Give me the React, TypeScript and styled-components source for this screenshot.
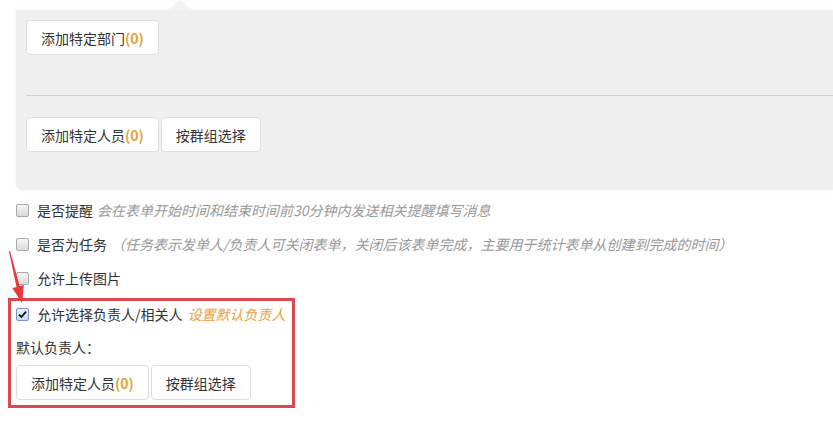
import styled, { createGlobalStyle } from 'styled-components';

const GlobalStyle = createGlobalStyle`
  body {
    margin: 0;
    background: #fefefe;
    font-family: "Noto Sans CJK SC", "Noto Sans", sans-serif;
    font-size: 14px;
    line-height: 20px;
    color: #333;
  }
`;

const Page = styled.div`
  position: relative;
  width: 833px;
  height: 423px;
  overflow: hidden;
  padding-top: 10px;
  box-sizing: border-box;
`;

const Panel = styled.div`
  position: relative;
  margin-left: 16px;
  height: 180px;
  box-sizing: border-box;
  padding: 10px 0 0 10px;
  background: #f0f0f0;
  border-radius: 0 0 0 6px;
  box-shadow: 0 0 4px rgba(0, 0, 0, 0.04);

  &::before {
    content: '';
    position: absolute;
    top: -10px;
    left: 152px;
    border-left: 12px solid transparent;
    border-right: 12px solid transparent;
    border-bottom: 10px solid #f3f3f3;
  }
`;

const Divider = styled.div`
  margin: 40px 0 21px;
  border-top: 1px solid #cfcfcf;
`;

const ButtonRow = styled.div`
  display: flex;
  gap: 2px;
`;

const Button = styled.button`
  height: 35px;
  padding: 0 14px;
  background: #fff;
  border: 1px solid #dedede;
  border-radius: 4px;
  font-family: inherit;
  font-size: 14px;
  color: #333;
  cursor: pointer;
`;

const Count = styled.b`
  color: #e8a13a;
  font-weight: bold;
`;

const Options = styled.div`
  padding-top: 3px;
`;

const Row = styled.label<{ $h?: number }>`
  display: flex;
  align-items: center;
  gap: 8px;
  height: ${(p) => p.$h ?? 34}px;
  padding-left: 16px;
`;

const Box = styled.span<{ $on?: boolean }>`
  display: inline-flex;
  align-items: center;
  justify-content: center;
  width: 13px;
  height: 13px;
  box-sizing: border-box;
  border: 1px solid ${(p) => (p.$on ? '#7b95c8' : '#a9a9a9')};
  border-radius: 2px;
  background: ${(p) =>
    p.$on ? 'linear-gradient(#e6eefb, #c9d8f2)' : 'linear-gradient(#f6f6f6, #dadada)'};
`;

const Hint = styled.span`
  color: #999;
  font-style: italic;
  margin-left: -4px;
`;

const Link = styled.span`
  color: #ec9f3c;
  font-style: italic;
  margin-left: 2px;
`;

const Highlight = styled.div`
  margin: 3px 0 0 8px;
  width: 287px;
  height: 110px;
  box-sizing: border-box;
  border: 3px solid #d74b50;

  ${Row} {
    padding-left: 5px;
  }
`;

const FieldLabel = styled.div`
  padding: 1px 0 0 5px;
  height: 37px;
  display: flex;
  align-items: center;
`;

const Inner = styled(ButtonRow)`
  padding-left: 5px;
`;

const Pointer = styled.svg`
  position: absolute;
  left: 0;
  top: 0;
  pointer-events: none;
`;

function Checkbox({ on }: { on?: boolean }) {
  return (
    <Box $on={on}>
      {on && (
        <svg width="9" height="9" viewBox="0 0 9 9">
          <path d="M1 4.6 L3.4 7 L8 1.6" fill="none" stroke="#111" strokeWidth="1.8" />
        </svg>
      )}
    </Box>
  );
}

export default function App() {
  return (
    <>
      <GlobalStyle />
      <Page>
        <Panel>
          <Button>
            添加特定部门<Count>(0)</Count>
          </Button>
          <Divider />
          <ButtonRow>
            <Button>
              添加特定人员<Count>(0)</Count>
            </Button>
            <Button>按群组选择</Button>
          </ButtonRow>
        </Panel>

        <Options>
          <Row>
            <Checkbox />
            是否提醒 <Hint>会在表单开始时间和结束时间前30分钟内发送相关提醒填写消息</Hint>
          </Row>
          <Row>
            <Checkbox />
            是否为任务 <Hint>（任务表示发单人/负责人可关闭表单，关闭后该表单完成，主要用于统计表单从创建到完成的时间）</Hint>
          </Row>
          <Row>
            <Checkbox />
            允许上传图片
          </Row>
          <Highlight>
            <Row $h={26}>
              <Checkbox on />
              <span>
                允许选择负责人/相关人 <Link>设置默认负责人</Link>
              </span>
            </Row>
            <FieldLabel>默认负责人：</FieldLabel>
            <Inner>
              <Button>
                添加特定人员<Count>(0)</Count>
              </Button>
              <Button>按群组选择</Button>
            </Inner>
          </Highlight>
        </Options>

        <Pointer width="40" height="320" viewBox="0 0 40 320">
          <polygon
            points="8.9,251.1 10.1,250.9 19.6,286.1 23.9,285.1 22,303 12.3,287.9 16.5,286.9"
            fill="#e8383d"
          />
        </Pointer>
      </Page>
    </>
  );
}
